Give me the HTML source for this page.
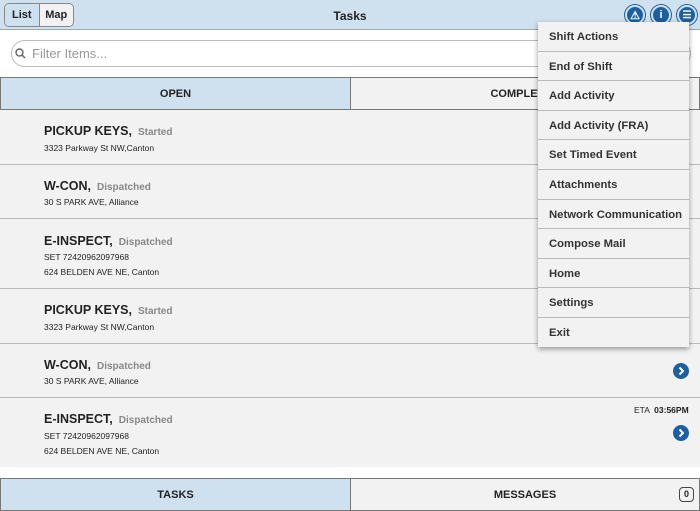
<!DOCTYPE html>
<html><head><style>
*{margin:0;padding:0;box-sizing:border-box}
body{width:700px;height:511px;overflow:hidden;background:#fff;font-family:"Liberation Sans",Arial,sans-serif;position:relative;color:#222}
.a{position:absolute}
.hdr{left:0;top:0;width:700px;height:30px;background:#cfe0ef;border-bottom:1px solid #9aa}
.seg{left:4px;top:3px;height:24px;width:70px;border:1px solid #888;border-radius:5px;overflow:hidden;display:flex;font-size:11px;font-weight:bold}
.seg div{flex:1;display:flex;align-items:center;justify-content:center}
.ic{width:20px;height:20px;border-radius:50%;background:#1d5fa0;border:2px solid #cfe0ef;box-shadow:0 0 0 1px #1d5fa0;color:#fff;font-size:11px;font-weight:bold;display:flex;align-items:center;justify-content:center;top:5px}
.search{left:11px;top:40px;width:680px;height:27px;border:1px solid #bbb;border-radius:14px;font-size:13px;color:#999;padding-left:20px;line-height:25px}
.tab{height:33px;border:1px solid #777;font-size:11px;font-weight:bold;display:flex;align-items:center;justify-content:center}
.row{left:0;width:700px;background:#f3f2f3;border-bottom:1px solid #bbb}
.t{position:absolute;left:44px;font-size:12.5px;font-weight:bold;color:#222}
.t span{font-size:10px;color:#888;margin-left:6px}
.s{position:absolute;left:44px;font-size:8.5px;color:#222}
.menu{left:538px;top:22px;width:151px;height:325px;background:#f3f2f3;box-shadow:0 2px 5px rgba(0,0,0,.4)}
.mi{height:29.6px;border-bottom:1px solid #bbb;font-size:11.3px;font-weight:bold;color:#333;padding-left:11px;line-height:31px}
</style></head><body>
<div class="a hdr"></div>
<div class="a seg"><div style="background:#cfe0ef;border-right:1px solid #888">List</div><div style="background:#f3f2f3">Map</div></div>
<div class="a" style="left:0;width:700px;top:9px;text-align:center;font-size:12px;font-weight:bold">Tasks</div>
<div class="a ic" style="left:625px">&#9888;</div>
<div class="a ic" style="left:651px">i</div>
<div class="a ic" style="left:677px;font-size:10px">&#9776;</div>
<div class="a search">Filter Items...</div>
<svg class="a" style="left:15px;top:48px" width="11" height="11"><circle cx="4.5" cy="4.5" r="3.5" fill="none" stroke="#666" stroke-width="1.4"/><path d="M7 7l3 3" stroke="#666" stroke-width="1.5"/></svg>
<div class="a tab" style="left:0;top:77px;width:351px;background:#cfe0ef">OPEN</div>
<div class="a tab" style="left:350px;top:77px;width:350px;background:#f3f2f3">COMPLETED</div>
<div class="a row" style="top:110px;height:55px"><div class="t" style="top:14px">PICKUP KEYS,<span>Started</span></div><div class="s" style="top:33px">3323 Parkway St NW,Canton</div></div>
<div class="a row" style="top:165px;height:54px"><div class="t" style="top:14px">W-CON,<span>Dispatched</span></div><div class="s" style="top:32px">30 S PARK AVE, Alliance</div></div>
<div class="a row" style="top:219px;height:70px"><div class="t" style="top:15px">E-INSPECT,<span>Dispatched</span></div><div class="s" style="top:33px">SET 72420962097968</div><div class="s" style="top:48px">624 BELDEN AVE NE, Canton</div></div>
<div class="a row" style="top:289px;height:55px"><div class="t" style="top:14px">PICKUP KEYS,<span>Started</span></div><div class="s" style="top:33px">3323 Parkway St NW,Canton</div></div>
<div class="a row" style="top:344px;height:54px"><div class="t" style="top:14px">W-CON,<span>Dispatched</span></div><div class="s" style="top:32px">30 S PARK AVE, Alliance</div></div>
<div class="a row" style="top:398px;height:69px;border:none"><div class="t" style="top:14px">E-INSPECT,<span>Dispatched</span></div><div class="s" style="top:33px">SET 72420962097968</div><div class="s" style="top:48px">624 BELDEN AVE NE, Canton</div>
<div style="position:absolute;left:634px;top:7px;font-size:8.5px">ETA &nbsp;<b>03:56PM</b></div></div>
<svg class="a" style="left:673px;top:363px" width="16" height="16"><circle cx="8" cy="8" r="8" fill="#1d5fa0"/><path d="M6.5 4.5l3.5 3.5-3.5 3.5" fill="none" stroke="#fff" stroke-width="2"/></svg>
<svg class="a" style="left:673px;top:425px" width="16" height="16"><circle cx="8" cy="8" r="8" fill="#1d5fa0"/><path d="M6.5 4.5l3.5 3.5-3.5 3.5" fill="none" stroke="#fff" stroke-width="2"/></svg>
<div class="a tab" style="left:0;top:478px;width:351px;background:#cfe0ef">TASKS</div>
<div class="a tab" style="left:350px;top:478px;width:350px;background:#f3f2f3">MESSAGES</div>
<div class="a" style="left:679px;top:487px;width:15px;height:15px;border:1px solid #444;border-radius:4px;font-size:9px;font-weight:bold;text-align:center;line-height:13px">0</div>
<div class="a menu">
<div class="mi">Shift Actions</div><div class="mi">End of Shift</div><div class="mi">Add Activity</div><div class="mi">Add Activity (FRA)</div><div class="mi">Set Timed Event</div><div class="mi">Attachments</div><div class="mi">Network Communication</div><div class="mi">Compose Mail</div><div class="mi">Home</div><div class="mi">Settings</div><div class="mi" style="border:none">Exit</div>
</div>
</body></html>
